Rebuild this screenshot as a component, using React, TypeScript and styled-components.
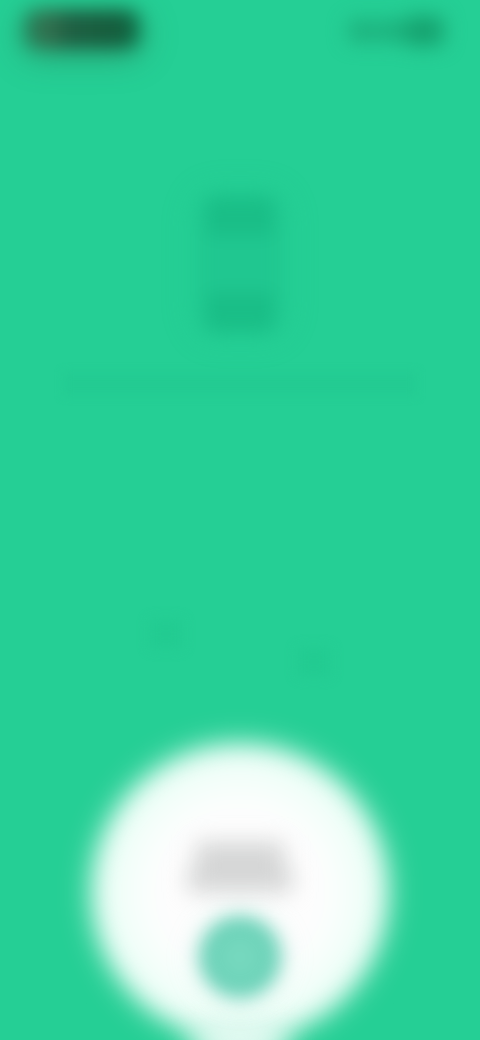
import React from 'react';
import styled, { createGlobalStyle } from 'styled-components';

const GlobalStyle = createGlobalStyle`
  *, *::before, *::after { box-sizing: border-box; }
  body { margin: 0; background: #25cf95; font-family: Roboto, sans-serif; }
`;

const Screen = styled.main`
  display: flex;
  flex-direction: column;
  align-items: center;
  min-height: 100vh;
  overflow: hidden;
  background: #25cf95;
`;

const StatusBar = styled.header`
  display: flex;
  justify-content: space-between;
  align-items: flex-start;
  width: 100%;
  padding: 10px 36px 0 24px;
`;

const Pill = styled.div`
  width: 116px;
  height: 38px;
  border-radius: 12px;
  background: linear-gradient(90deg, #22855d 0, #35704f 24px, #1f5f43 44px, #155c3c 94px, #0f744c 100%);
  box-shadow: 0 6px 28px rgba(40, 110, 78, 0.6);
  filter: blur(9px);
`;

const StatusIcons = styled.div`
  display: flex;
  align-items: center;
  padding-top: 6px;
  filter: blur(10px);
`;

const StatusMark = styled.span<{ $width: number; $strong?: boolean }>`
  width: ${({ $width }) => $width}px;
  height: ${({ $strong }) => ($strong ? 30 : 22)}px;
  border-radius: 8px;
  background: ${({ $strong }) => ($strong ? '#16a26f' : '#1cb07c')};
`;

const Emblem = styled.div`
  display: flex;
  flex-direction: column;
  justify-content: space-between;
  width: 84px;
  height: 136px;
  margin-top: 148px;
  border-radius: 16px;
  background: #20c790;
  box-shadow: 0 0 24px rgba(32, 200, 142, 0.6);
  filter: blur(9px);
`;

const EmblemBand = styled.span`
  height: 40px;
  margin: 0 8px;
  border-radius: 8px;
  background: #1abe87;
`;

const Caption = styled.div`
  width: calc(100% - 128px);
  height: 24px;
  margin-top: 40px;
  background: #23cb92;
  filter: blur(4px);
`;

const Specks = styled.div`
  display: flex;
  justify-content: space-between;
  width: 180px;
  margin-top: 224px;
  filter: blur(6px);
`;

const Speck = styled.span<{ $low?: boolean }>`
  width: 32px;
  height: 28px;
  margin-top: ${({ $low }) => ($low ? 28 : 0)}px;
  background: #22cb91;
`;

const Disc = styled.section`
  position: relative;
  isolation: isolate;
  display: flex;
  flex-direction: column;
  align-items: center;
  width: 296px;
  height: 296px;
  margin-top: auto;
  padding-top: 98px;

  &::before {
    content: '';
    position: absolute;
    z-index: -1;
    inset: 0;
    border-radius: 50%;
    background: radial-gradient(circle closest-side, #fdfdfd 0 56%, #f6fffb 72%, #e6fcf3 100%);
    box-shadow: 0 0 28px rgba(255, 255, 255, 0.35);
    filter: blur(12px);
  }

  &::after {
    content: '';
    position: absolute;
    z-index: -1;
    bottom: -24px;
    left: 98px;
    width: 100px;
    height: 48px;
    border-radius: 50%;
    background: #e4faf2;
    filter: blur(14px);
  }
`;

const Label = styled.div`
  display: flex;
  flex-direction: column;
  align-items: center;
  width: 104px;
  filter: blur(11px);
`;

const LabelLine = styled.span<{ $width: number }>`
  width: ${({ $width }) => $width}px;
  height: 25px;
  background: #d5d6d6;
`;

const ActionButton = styled.button`
  width: 82px;
  height: 82px;
  margin-top: 24px;
  padding: 0;
  border: 0;
  border-radius: 50%;
  background: radial-gradient(circle closest-side, #76d8be 0 30%, #66cfb5 100%);
  box-shadow: 0 0 24px rgba(140, 230, 205, 0.35);
  filter: blur(9px);
  cursor: pointer;
`;

export default function App() {
  return (
    <>
      <GlobalStyle />
      <Screen>
        <StatusBar>
          <Pill />
          <StatusIcons>
            <StatusMark $width={28} />
            <StatusMark $width={28} />
            <StatusMark $width={40} $strong />
          </StatusIcons>
        </StatusBar>
        <Emblem>
          <EmblemBand />
          <EmblemBand />
        </Emblem>
        <Caption />
        <Specks>
          <Speck />
          <Speck $low />
        </Specks>
        <Disc>
          <Label>
            <LabelLine $width={88} />
            <LabelLine $width={104} />
          </Label>
          <ActionButton type="button" aria-label="Start" />
        </Disc>
      </Screen>
    </>
  );
}
